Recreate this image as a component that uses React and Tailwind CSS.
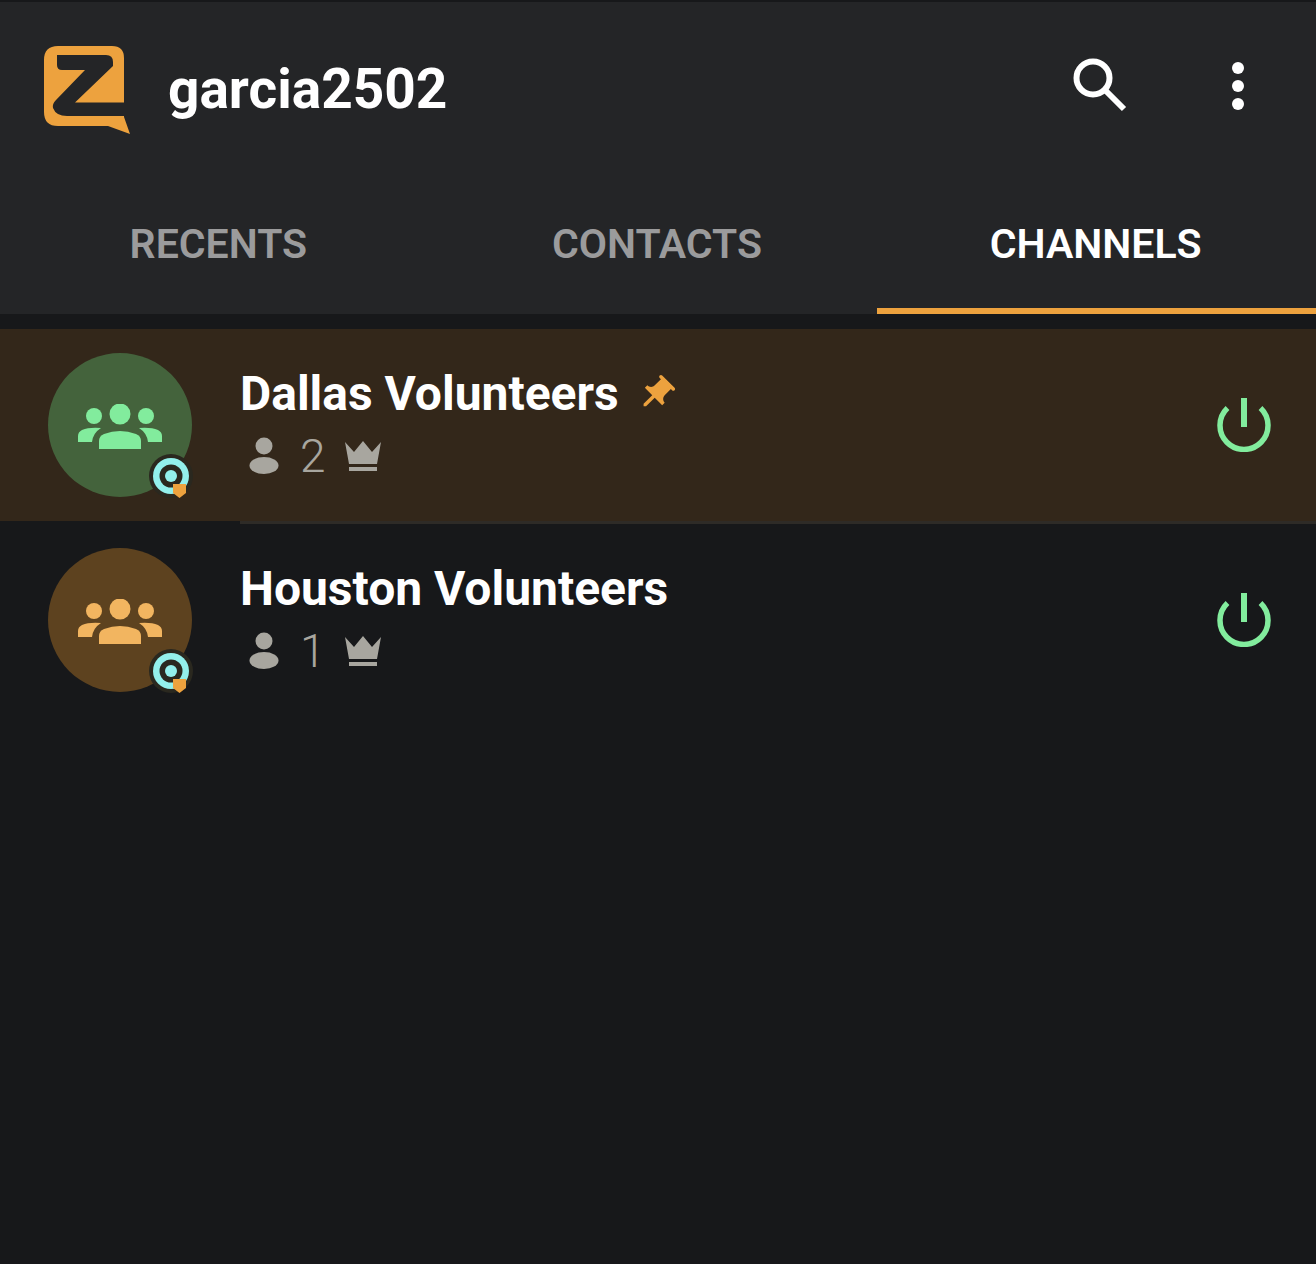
import React from "react";

function Logo() {
  return (
    <svg width="88" height="90" viewBox="0 0 88 90" className="block">
      <path
        d="M14 0H68Q80 0 80 12V71L86 88L64 80H14Q0 80 0 66V14Q0 0 14 0Z"
        fill="#eda23e"
      />
      <path
        d="M13 9H62Q69 9 69 16V20L31 56.5H80V70H23Q12 70 9 62Q8 58 12 54L41 24H18Q13 24 13 19Z"
        fill="#242527"
      />
    </svg>
  );
}

function GroupIcon({ color }) {
  return (
    <svg width="84" height="46" viewBox="0 0 84 46" className="mt-[4px] block" fill={color}>
      <circle cx="42" cy="10" r="10.5" />
      <circle cx="16" cy="12" r="8" />
      <circle cx="68" cy="12" r="8" />
      <path d="M21 45V37Q21 32 26 30Q34 27 42 27Q50 27 58 30Q63 32 63 37V45Z" />
      <path d="M0 38V32Q0 28 4 26Q11 23 23 24Q15 29 14 38Z" />
      <path d="M84 38V32Q84 28 80 26Q73 23 61 24Q69 29 70 38Z" />
    </svg>
  );
}

function Badge() {
  return (
    <svg width="44" height="44" viewBox="0 0 44 44" className="absolute left-[101px] top-[101px]">
      <circle cx="22" cy="22" r="22" fill="#2a281f" />
      <circle cx="22" cy="22" r="18" fill="#93f0ec" />
      <circle cx="22" cy="22" r="11.5" fill="#2a281f" />
      <circle cx="22" cy="22" r="6" fill="#93f0ec" />
      <path d="M24 30H37V39L30.5 44L24 39Z" fill="#eda23e" />
    </svg>
  );
}

function PersonIcon() {
  return (
    <svg width="30" height="38" viewBox="0 0 30 38" className="block" fill="#a8a69f">
      <circle cx="15" cy="9" r="8.5" />
      <ellipse cx="15" cy="28.5" rx="14.5" ry="8.5" />
    </svg>
  );
}

function CrownIcon() {
  return (
    <svg width="36" height="30" viewBox="0 0 36 30" className="block" fill="#a8a69f">
      <path d="M0 1L9 11L18 0L27 11L36 1L32 23H4Z" />
      <rect x="4" y="26" width="28" height="4" />
    </svg>
  );
}

function PowerIcon() {
  return (
    <svg width="56" height="56" viewBox="0 0 56 56" className="-mt-[2px] block" fill="none" stroke="#82ec9d" strokeWidth="5.5">
      <path d="M11.5 12A24 24 0 1 0 44.5 12" />
      <path d="M28 2V31" strokeWidth="6" />
    </svg>
  );
}

function PinIcon() {
  return (
    <svg width="42" height="42" viewBox="0 0 24 24" className="block rotate-45" fill="#eda23e">
      <path d="M16 9V4h1c.55 0 1-.45 1-1s-.45-1-1-1H7c-.55 0-1 .45-1 1s.45 1 1 1h1v5c0 1.66-1.34 3-3 3v2h5.97v7l1 1 1-1v-7H19v-2c-1.66 0-3-1.34-3-3z" />
    </svg>
  );
}

function ChannelRow({ name, count, avatarBg, iconColor, pinned, rowBg }) {
  return (
    <div className={`relative flex h-[192px] items-center pl-[48px] pr-[44px] ${rowBg}`}>
      <div className="relative h-[144px] w-[144px] shrink-0">
        <div className={`flex h-[144px] w-[144px] items-center justify-center rounded-full ${avatarBg}`}>
          <GroupIcon color={iconColor} />
        </div>
        <Badge />
      </div>
      <div className="ml-[48px] flex-1">
        <div className="flex h-[56px] items-center gap-[16px]">
          <span className="text-[48px] leading-[56px] font-bold text-white">{name}</span>
          {pinned && <PinIcon />}
        </div>
        <div className="mt-[6px] flex h-[56px] items-center pl-[9px]">
          <PersonIcon />
          <span className="ml-[21px] w-[45px] text-[46px] leading-[56px] font-light text-[#a8a69f]">{count}</span>
          <CrownIcon />
        </div>
      </div>
      <PowerIcon />
    </div>
  );
}

export default function App() {
  return (
    <div className="min-h-[1264px] bg-[#17181a] font-['Roboto',sans-serif]">
      <header className="border-t-2 border-[#17181a] bg-[#242527]">
        <div className="flex h-[170px] items-center pl-[44px] pr-[72px]">
          <div className="mt-[7px]">
            <Logo />
          </div>
          <h1 className="ml-[36px] mt-[3px] flex-1 text-[55px] leading-[64px] font-bold text-white">garcia2502</h1>
          <svg width="60" height="60" viewBox="0 0 60 60" fill="none" stroke="#ffffff" strokeWidth="6" className="mr-[100px] -mt-[1px] block">
            <circle cx="21" cy="21" r="16.5" />
            <path d="M33 33L52 52" />
          </svg>
          <div className="-mt-[2px] flex flex-col gap-[6px]">
            <div className="h-[12px] w-[12px] rounded-full bg-white" />
            <div className="h-[12px] w-[12px] rounded-full bg-white" />
            <div className="h-[12px] w-[12px] rounded-full bg-white" />
          </div>
        </div>
        <nav className="grid h-[142px] grid-cols-3 text-[41px] font-semibold">
          <div className="flex items-center justify-center pt-[3px] pr-[2px] text-[#9b9b9c]">RECENTS</div>
          <div className="flex items-center justify-center pt-[3px] pr-[2px] text-[#9b9b9c]">CONTACTS</div>
          <div className="flex items-center justify-center border-b-[6px] border-[#eda23e] pt-[9px] pr-[2px] text-white">CHANNELS</div>
        </nav>
      </header>
      <main className="pt-[15px]">
        <ChannelRow
          name="Dallas Volunteers"
          count="2"
          avatarBg="bg-[#44633c]"
          iconColor="#82ec9d"
          rowBg="bg-[#33271a]"
          pinned
        />
        <div className="ml-[240px] h-[3px] bg-[#2e2b27]" />
        <ChannelRow
          name="Houston Volunteers"
          count="1"
          avatarBg="bg-[#5d421f]"
          iconColor="#f2b560"
          rowBg=""
        />
      </main>
    </div>
  );
}
